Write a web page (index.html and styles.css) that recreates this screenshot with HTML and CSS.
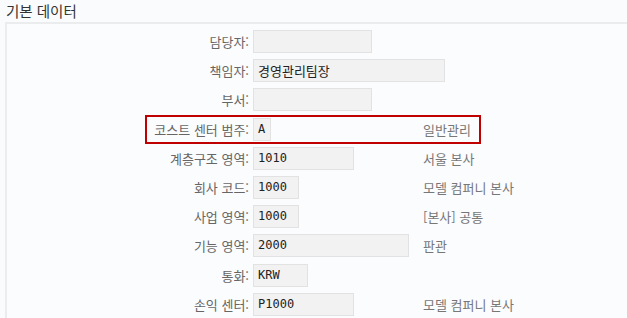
FILE: index.html
```html
<!DOCTYPE html>
<html lang="ko">
<head>
  <meta charset="UTF-8">
  <title>기본 데이터</title>
  <link rel="stylesheet" href="styles.css">
</head>
<body>
  <div class="section-title">기본 데이터</div>
  <div class="panel">
    <div class="row">
      <label>담당자:</label>
      <div class="field"><span class="box" style="width:119px"></span></div>
    </div>
    <div class="row">
      <label>책임자:</label>
      <div class="field"><span class="box text" style="width:192px">경영관리팀장</span></div>
    </div>
    <div class="row">
      <label>부서:</label>
      <div class="field"><span class="box" style="width:119px"></span></div>
    </div>
    <div class="row marked">
      <label>코스트 센터 범주:</label>
      <div class="field"><span class="box" style="width:18px">A</span></div>
      <div class="desc">일반관리</div>
    </div>
    <div class="row">
      <label>계층구조 영역:</label>
      <div class="field"><span class="box" style="width:101px">1010</span></div>
      <div class="desc">서울 본사</div>
    </div>
    <div class="row">
      <label>회사 코드:</label>
      <div class="field"><span class="box" style="width:46px">1000</span></div>
      <div class="desc">모델 컴퍼니 본사</div>
    </div>
    <div class="row">
      <label>사업 영역:</label>
      <div class="field"><span class="box" style="width:46px">1000</span></div>
      <div class="desc">[본사] 공통</div>
    </div>
    <div class="row">
      <label>기능 영역:</label>
      <div class="field"><span class="box" style="width:156px">2000</span></div>
      <div class="desc">판관</div>
    </div>
    <div class="row">
      <label>통화:</label>
      <div class="field"><span class="box" style="width:55px">KRW</span></div>
    </div>
    <div class="row">
      <label>손익 센터:</label>
      <div class="field"><span class="box" style="width:101px">P1000</span></div>
      <div class="desc">모델 컴퍼니 본사</div>
    </div>
  </div>
</body>
</html>
```

FILE: styles.css
```css
body {
  margin: 0;
  background: #fafbfd;
  font-family: "Noto Sans CJK KR", "Noto Sans", sans-serif;
  overflow: hidden;
}
.section-title {
  font-size: 14.5px;
  color: #333;
  padding: 1px 0 0 6px;
  height: 21px;
  line-height: 19px;
}
.panel {
  margin-left: 5px;
  border: 2px solid #ebecee;
  border-right: none;
  padding-top: 3px;
  background: #fbfcfe;
}
.row {
  position: relative;
  display: flex;
  align-items: center;
  height: 29.2px;
}
label {
  flex: none;
  width: 242px;
  text-align: right;
  font-size: 13px;
  color: #666;
  padding-right: 4px;
}
.field {
  flex: none;
  width: 170px;
  display: flex;
}
.box {
  display: block;
  flex: none;
  box-sizing: border-box;
  height: 23px;
  background: #f2f2f2;
  border: 1px solid #e2e2e2;
  padding-left: 4px;
  font-family: "DejaVu Sans Mono", "Noto Sans CJK KR", monospace;
  font-size: 12px;
  line-height: 21px;
  color: #222;
}
.box.text {
  font-family: "Noto Sans CJK KR", sans-serif;
  font-size: 13px;
}
.desc {
  font-size: 13px;
  color: #777;
}
.marked::after {
  content: "";
  position: absolute;
  left: 138px;
  width: 336px;
  top: 0;
  height: 29px;
  box-sizing: border-box;
  border: 2px solid #c00000;
}
```
